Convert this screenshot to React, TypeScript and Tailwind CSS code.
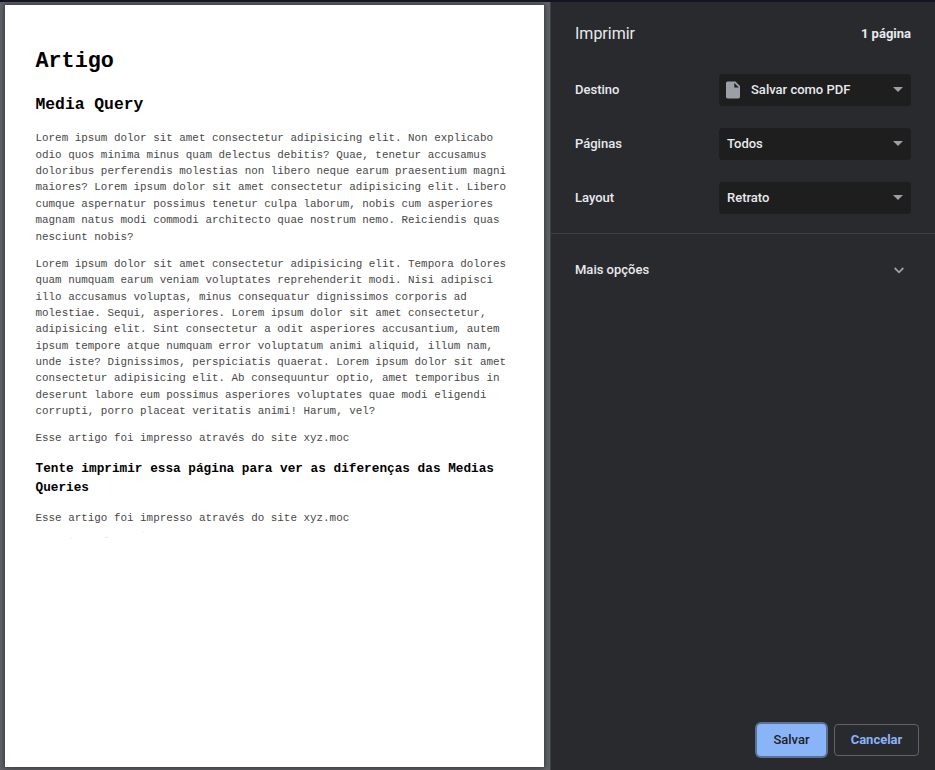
import type { ReactNode } from "react";

function Field({ label, value, icon }: { label: string; value: string; icon?: ReactNode }) {
  return (
    <div className="flex h-8 items-center justify-between">
      <span>{label}</span>
      <div className="flex h-8 w-48 items-center rounded bg-[#1e1e1f] px-2">
        {icon}
        <span className="flex-1">{value}</span>
        <svg width="10" height="5" viewBox="0 0 10 5" className="mb-px fill-[#9aa0a6]">
          <path d="M0 0h10L5 5z" />
        </svg>
      </div>
    </div>
  );
}

const fileIcon = (
  <svg width="14" height="18" viewBox="0 0 14 18" className="mr-[11px] -ml-px fill-[#9aa0a6]">
    <path fillRule="evenodd" d="M2 .5h7.5L14 5v10.800a1.700 1.700 0 0 1-1.700 1.700H1.700A1.700 1.700 0 0 1 0 15.800V2.200A1.700 1.700 0 0 1 2 .5zM8.300 2v4.500h4.500z" />
  </svg>
);

export default function App() {
  return (
    <div className="flex h-[770px] w-[935px] flex-col overflow-hidden bg-[#292a2d]">
      <div className="h-0.5 shrink-0 bg-[#13131f]" />
      <div className="flex min-h-0 flex-1">
        <main className="w-[550px] shrink-0 bg-[#5f6368] pt-[3px] pl-[5px]">
          <article className="h-[762px] w-[539px] bg-white pt-[41px] pl-[30.500px] font-['Courier_New','Liberation_Mono',monospace] text-[10.900px] leading-[16.340px] whitespace-pre text-[#484848] shadow-[0_0_5px_1px_#35383b]">
            <h1 className="text-[21.780px] leading-[32.670px] font-bold text-black">Artigo</h1>
            <h2 className="mt-[14.590px] text-[16.330px] leading-[24.500px] font-bold text-black">Media Query</h2>
            <p className="mt-[12.700px]">{`Lorem ipsum dolor sit amet consectetur adipisicing elit. Non explicabo
odio quos minima minus quam delectus debitis? Quae, tenetur accusamus
doloribus perferendis molestias non libero neque earum praesentium magni
maiores? Lorem ipsum dolor sit amet consectetur adipisicing elit. Libero
cumque aspernatur possimus tenetur culpa laborum, nobis cum asperiores
magnam natus modi commodi architecto quae nostrum nemo. Reiciendis quas
nesciunt nobis?`}</p>
            <p className="mt-[11.100px]">{`Lorem ipsum dolor sit amet consectetur adipisicing elit. Tempora dolores
quam numquam earum veniam voluptates reprehenderit modi. Nisi adipisci
illo accusamus voluptas, minus consequatur dignissimos corporis ad
molestiae. Sequi, asperiores. Lorem ipsum dolor sit amet consectetur,
adipisicing elit. Sint consectetur a odit asperiores accusantium, autem
ipsum tempore atque numquam error voluptatum animi aliquid, illum nam,
unde iste? Dignissimos, perspiciatis quaerat. Lorem ipsum dolor sit amet
consectetur adipisicing elit. Ab consequuntur optio, amet temporibus in
deserunt labore eum possimus asperiores voluptates quae modi eligendi
corrupti, porro placeat veritatis animi! Harum, vel?`}</p>
            <p className="mt-[10.890px]">Esse artigo foi impresso através do site xyz.moc</p>
            <h3 className="mt-[12.740px] text-[12.740px] leading-[19.110px] font-bold text-black">{`Tente imprimir essa página para ver as diferenças das Medias
Queries`}</h3>
            <p className="mt-[12.740px]">Esse artigo foi impresso através do site xyz.moc</p>
            <svg width="120" height="12" className="mt-1 fill-[#e8e8e8]">
              <path d="M35 7h1v1h-1zM69 6h3v1h-3zM107 0h1v1h-1z" />
            </svg>
          </article>
        </main>
        <aside className="flex flex-1 flex-col border-l border-[#3f4042] bg-[#292a2d] font-[Roboto,sans-serif] text-[13px] font-medium text-[#e8eaed]">
          <header className="flex h-16 items-center justify-between pr-6 pl-6">
            <h1 className="text-[16px] font-normal">Imprimir</h1>
            <span className="text-[13px] font-bold">1 página</span>
          </header>
          <section className="flex h-[168px] flex-col gap-[22px] border-b border-[#3f4042] px-6 pt-2">
            <Field label="Destino" value="Salvar como PDF" icon={fileIcon} />
            <Field label="Páginas" value="Todos" />
            <Field label="Layout" value="Retrato" />
          </section>
          <section className="flex h-[71px] items-center justify-between pr-[31px] pl-6">
            <span>Mais opções</span>
            <svg width="10" height="7" viewBox="0 0 10 7" className="mt-px fill-none stroke-[#9aa0a6] stroke-[1.8]">
              <path d="M.7 1 5 5.300 9.300 1" />
            </svg>
          </section>
          <footer className="mt-auto mb-[14px] flex items-center justify-end gap-2 pr-4">
            <button className="h-8 w-[69px] rounded bg-[#8ab4f8] text-[#202124] shadow-[0_0_0_2px_#5a7294]">Salvar</button>
            <button className="h-8 w-[85px] rounded border border-[#5f6368] font-bold text-[#8ab4f8]">Cancelar</button>
          </footer>
        </aside>
      </div>
    </div>
  );
}
